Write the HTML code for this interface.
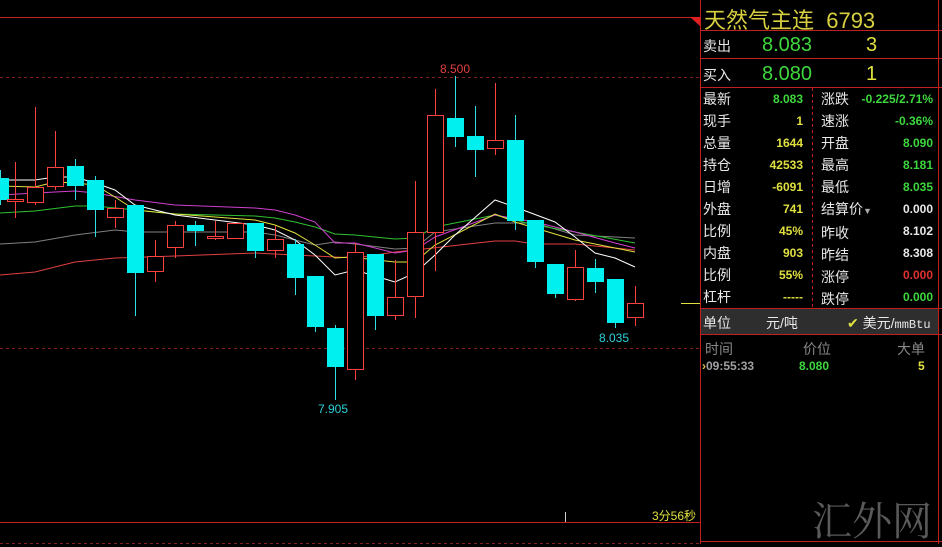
<!DOCTYPE html>
<html><head><meta charset="utf-8"><style>
*{margin:0;padding:0}
body{width:942px;height:544px;background:#000;overflow:hidden;position:relative;font-family:"Liberation Sans","Noto Sans CJK SC",sans-serif}
.t{position:absolute;white-space:nowrap}
.l{color:#e8e8e8;font-size:14px}
.v{font-size:12px;font-weight:bold;text-align:right}
.g{color:#3dd83d}.y{color:#e0e040}.w{color:#e8e8e8}.r{color:#e03030}
</style></head><body>
<svg width="942" height="544" style="position:absolute;left:0;top:0">
<line x1="0" y1="17.5" x2="700" y2="17.5" stroke="#c02020"/>
<polygon points="690,17 700,17 700,26" fill="#e02020"/>
<line x1="700.5" y1="0" x2="700.5" y2="544" stroke="#c02020"/>
<line x1="0" y1="77.5" x2="700" y2="77.5" stroke="#802020" stroke-dasharray="3,3"/>
<line x1="0" y1="348.5" x2="700" y2="348.5" stroke="#802020" stroke-dasharray="3,3"/>
<line x1="0" y1="522.5" x2="700" y2="522.5" stroke="#c02020"/>
<line x1="0" y1="543.5" x2="700" y2="543.5" stroke="#802020" stroke-dasharray="3,3"/>
<line x1="565.5" y1="512" x2="565.5" y2="522" stroke="#ccc"/>
<line x1="681" y1="303.5" x2="700" y2="303.5" stroke="#e0e040"/>
<line x1="700" y1="30.5" x2="942" y2="30.5" stroke="#c02020"/>
<line x1="700" y1="58.5" x2="942" y2="58.5" stroke="#c02020"/>
<line x1="700" y1="87.5" x2="942" y2="87.5" stroke="#c02020"/>
<line x1="812.5" y1="88" x2="812.5" y2="308" stroke="#c02020" stroke-dasharray="3,3"/>
<line x1="700" y1="308.5" x2="942" y2="308.5" stroke="#c02020"/>
<rect x="701" y="309" width="237" height="25" fill="#2e2e2e"/>
<line x1="700" y1="334.5" x2="942" y2="334.5" stroke="#c02020"/>
<line x1="938.5" y1="0" x2="938.5" y2="544" stroke="#c02020"/>
<line x1="700" y1="541.5" x2="942" y2="541.5" stroke="#c02020"/>
<g fill="none" stroke-width="1">
<polyline stroke="#808080" points="0,244 35,242 75,235 115,230 135,232 255,232 275,235 295,240 315,245 335,242 355,244 395,249 415,248 435,232 495,223 535,223 575,235 635,238"/>
<polyline stroke="#e04040" points="0,275 35,272 75,262 115,258 175,256 255,253 295,255 335,257 355,258 395,252 415,250 495,241 515,241 535,244 575,244 635,250"/>
<polyline stroke="#30c030" points="0,213 35,211 75,206 95,206 135,210 175,214 255,216 275,218 295,222 315,227 335,234 355,235 395,239 415,238 435,227 495,215 535,225 575,232 635,243"/>
<polyline stroke="#d040d0" points="0,195 55,192 75,191 95,193 135,200 175,205 255,208 275,210 295,215 315,222 335,243 355,243 395,253 415,250 435,237 495,215 535,222 575,232 615,243 635,248"/>
<polyline stroke="#e0e040" points="0,186 35,187 55,182 75,183 95,185 115,197 135,210 175,214 255,220 275,225 295,233 315,245 335,258 350,257 395,262 415,262 435,245 495,214 515,222 535,228 575,240 635,252"/>
<polyline stroke="#ffffff" points="0,180 35,180 55,177 75,177 95,183 115,190 135,205 175,215 255,225 275,230 295,240 315,255 335,275 355,270 395,282 415,273 435,255 455,235 495,200 515,207 555,222 575,237 595,253 615,258 635,267"/>
</g>
<g id="c" shape-rendering="crispEdges"></g>
<text x="440" y="73" fill="#e04040" font-size="12" font-family="Liberation Sans">8.500</text>
<text x="318" y="413" fill="#30d0d8" font-size="12" font-family="Liberation Sans">7.905</text>
<text x="599" y="342" fill="#30d0d8" font-size="12" font-family="Liberation Sans">8.035</text>
</svg>
<script>
var d=[[0,178,200,170,205,0],[15,199,202,162,218,1],[35,187,203,107,205,1],[55,167,187,131,190,1],[75,166,186,159,200,0],[95,180,210,176,237,0],[115,208,218,200,228,1],[135,205,273,205,316,0],[155,256,272,240,282,1],[175,225,248,221,258,1],[195,225,231,221,246,0],[215,236,239,221,240,1],[235,223,239,223,239,1],[255,223,251,223,258,0],[275,239,251,226,258,1],[295,244,278,239,295,0],[315,276,327,276,332,0],[335,328,367,325,400,0],[355,252,370,243,380,1],[375,254,316,254,330,0],[395,297,316,260,320,1],[415,232,297,181,318,1],[435,115,233,89,271,1],[455,118,137,76,147,0],[475,136,150,106,177,0],[495,140,149,83,155,1],[515,140,221,115,230,0],[535,220,262,220,268,0],[555,264,294,264,298,0],[575,267,300,250,301,1],[595,268,282,259,293,0],[615,279,323,279,328,0],[635,303,318,286,326,1]];
var s='';d.forEach(function(c){var x=c[0],t=Math.min(c[1],c[2]),b=Math.max(c[1],c[2]);
if(c[5]){s+='<rect x="'+x+'" y="'+c[3]+'" width="1" height="'+(t-c[3])+'" fill="#ff4040"/><rect x="'+x+'" y="'+b+'" width="1" height="'+(c[4]-b)+'" fill="#ff4040"/><rect x="'+(x-8)+'" y="'+t+'" width="17" height="'+Math.max(b-t,3)+'" fill="#ff4040"/><rect x="'+(x-7)+'" y="'+(t+1)+'" width="15" height="'+Math.max(b-t-2,1)+'" fill="#000"/>';}
else{s+='<rect x="'+x+'" y="'+c[3]+'" width="1" height="'+(c[4]-c[3])+'" fill="#30e0e0"/><rect x="'+(x-8)+'" y="'+t+'" width="17" height="'+Math.max(b-t,2)+'" fill="#00f0f0"/>';}});
document.getElementById('c').innerHTML=s;
</script>
<div class="t" style="left:704px;top:3px;font-size:22px;color:#d8d040">天然气主连&nbsp;&nbsp;6793</div>
<div class="t l" style="left:703px;top:36px">卖出</div>
<div class="t g" style="left:762px;top:34px;font-size:20px">8.083</div>
<div class="t y" style="left:866px;top:34px;font-size:20px">3</div>
<div class="t l" style="left:703px;top:65px">买入</div>
<div class="t g" style="left:762px;top:63px;font-size:20px">8.080</div>
<div class="t y" style="left:866px;top:63px;font-size:20px">1</div>
<div class="t" style="left:703px;top:88px;width:102px;line-height:22px">
<div class="l">最新</div><div class="l">现手</div><div class="l">总量</div><div class="l">持仓</div><div class="l">日增</div><div class="l">外盘</div><div class="l">比例</div><div class="l">内盘</div><div class="l">比例</div><div class="l">杠杆</div></div>
<div class="t v" style="left:740px;top:88px;width:63px;line-height:22px">
<div class="g">8.083</div><div class="y">1</div><div class="y">1644</div><div class="y">42533</div><div class="y">-6091</div><div class="y">741</div><div class="y">45%</div><div class="y">903</div><div class="y">55%</div><div class="y">-----</div></div>
<div class="t" style="left:821px;top:88px;line-height:22px">
<div class="l">涨跌</div><div class="l">速涨</div><div class="l">开盘</div><div class="l">最高</div><div class="l">最低</div><div class="l">结算价<span style="font-size:9px;color:#aaa">▼</span></div><div class="l">昨收</div><div class="l">昨结</div><div class="l">涨停</div><div class="l">跌停</div></div>
<div class="t v" style="left:850px;top:88px;width:83px;line-height:22px">
<div class="g">-0.225/2.71%</div><div class="g">-0.36%</div><div class="g">8.090</div><div class="g">8.181</div><div class="g">8.035</div><div class="w">0.000</div><div class="w">8.102</div><div class="w">8.308</div><div class="r">0.000</div><div class="g">0.000</div></div>
<div class="t l" style="left:703px;top:313px">单位</div>
<div class="t l" style="left:766px;top:313px">元/吨</div>
<div class="t l" style="left:847px;top:313px"><span style="color:#e0e040">✔</span> 美元/<span style="font-family:'Liberation Mono';font-size:12px">mmBtu</span></div>
<div class="t" style="left:705px;top:339px;font-size:14px;color:#888">时间</div>
<div class="t" style="left:803px;top:339px;font-size:14px;color:#888">价位</div>
<div class="t" style="left:897px;top:339px;font-size:14px;color:#888">大单</div>
<div class="t" style="left:702px;top:359px;font-size:12px;font-weight:bold;color:#a0a0a0"><span style="color:#e0c040">›</span>09:55:33</div>
<div class="t g" style="left:799px;top:359px;font-size:12px;font-weight:bold">8.080</div>
<div class="t y" style="left:918px;top:359px;font-size:12px;font-weight:bold">5</div>
<div class="t" style="left:652px;top:507px;font-size:12px;color:#e0e040">3分56秒</div>
<div class="t" style="left:812px;top:490px;font-size:40px;color:#5a5a5a;font-family:'Liberation Serif','Noto Serif CJK SC',serif">汇外网</div>
</body></html>
